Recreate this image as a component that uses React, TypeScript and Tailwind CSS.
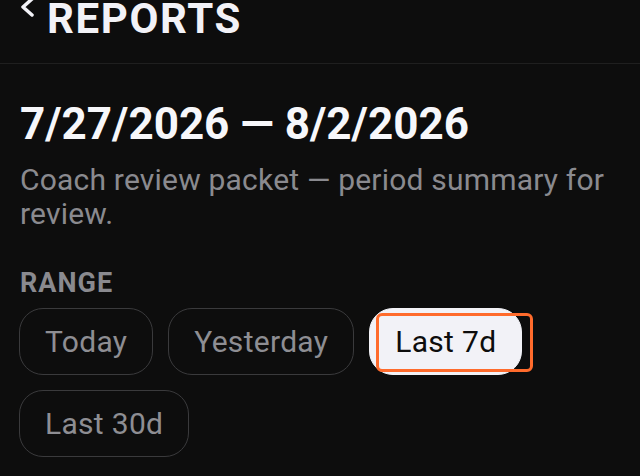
export default function App() {
  const pill = "h-[67px] px-[25px] rounded-[24px] border border-[#3a3a3c] text-[30px] leading-[36px] tracking-[0.3px] text-[#8e8e93] flex items-center";
  return (
    <div className="w-[640px] h-[476px] overflow-hidden bg-[#0d0d0d] text-white" style={{ fontFamily: 'Roboto, "Noto Sans", sans-serif' }}>
      <div className="h-[64px] border-b border-[#1f1f1f] flex items-start pl-[19px] overflow-hidden">
        <div className="flex items-start -mt-[6px]">
          <svg width="16" height="24" viewBox="0 0 16 24" className="mt-[3px] mr-[12px]" fill="none">
            <polyline points="13,2 4,10 13,18" stroke="#f2f2f7" strokeWidth="3.5" strokeLinecap="round" strokeLinejoin="round" />
          </svg>
          <span className="text-[42px] leading-[50px] font-bold tracking-[1.6px] text-[#f2f2f7]">REPORTS</span>
        </div>
      </div>
      <div className="px-5 pt-[34px]">
        <div className="text-[44px] leading-[52px] font-bold text-[#f7f7fa]">7/27/2026 — 8/2/2026</div>
        <div className="mt-[13px] text-[30px] leading-[34px] tracking-[0.2px] text-[#8a8a8f]">Coach review packet — period summary for review.</div>
        <div className="mt-[36px] text-[27px] leading-[32px] font-bold tracking-[1px] text-[#8a8a8f]">RANGE</div>
        <div className="mt-[9px] flex flex-wrap gap-[15px] -ml-[1px]">
          <button className={pill}>Today</button>
          <button className={pill}>Yesterday</button>
          <div className="relative">
            <button className="h-[67px] px-[25px] rounded-[24px] border border-[#f2f2f7] bg-[#f2f2f7] text-[30px] leading-[36px] tracking-[0.3px] text-[#0d0d0d] flex items-center">Last 7d</button>
            <div className="absolute left-[7px] top-[5px] w-[157px] h-[59px] rounded-[6px] border-[3px] border-[#ff6b2c] pointer-events-none" />
          </div>
          <button className={pill}>Last 30d</button>
        </div>
      </div>
    </div>
  );
}
